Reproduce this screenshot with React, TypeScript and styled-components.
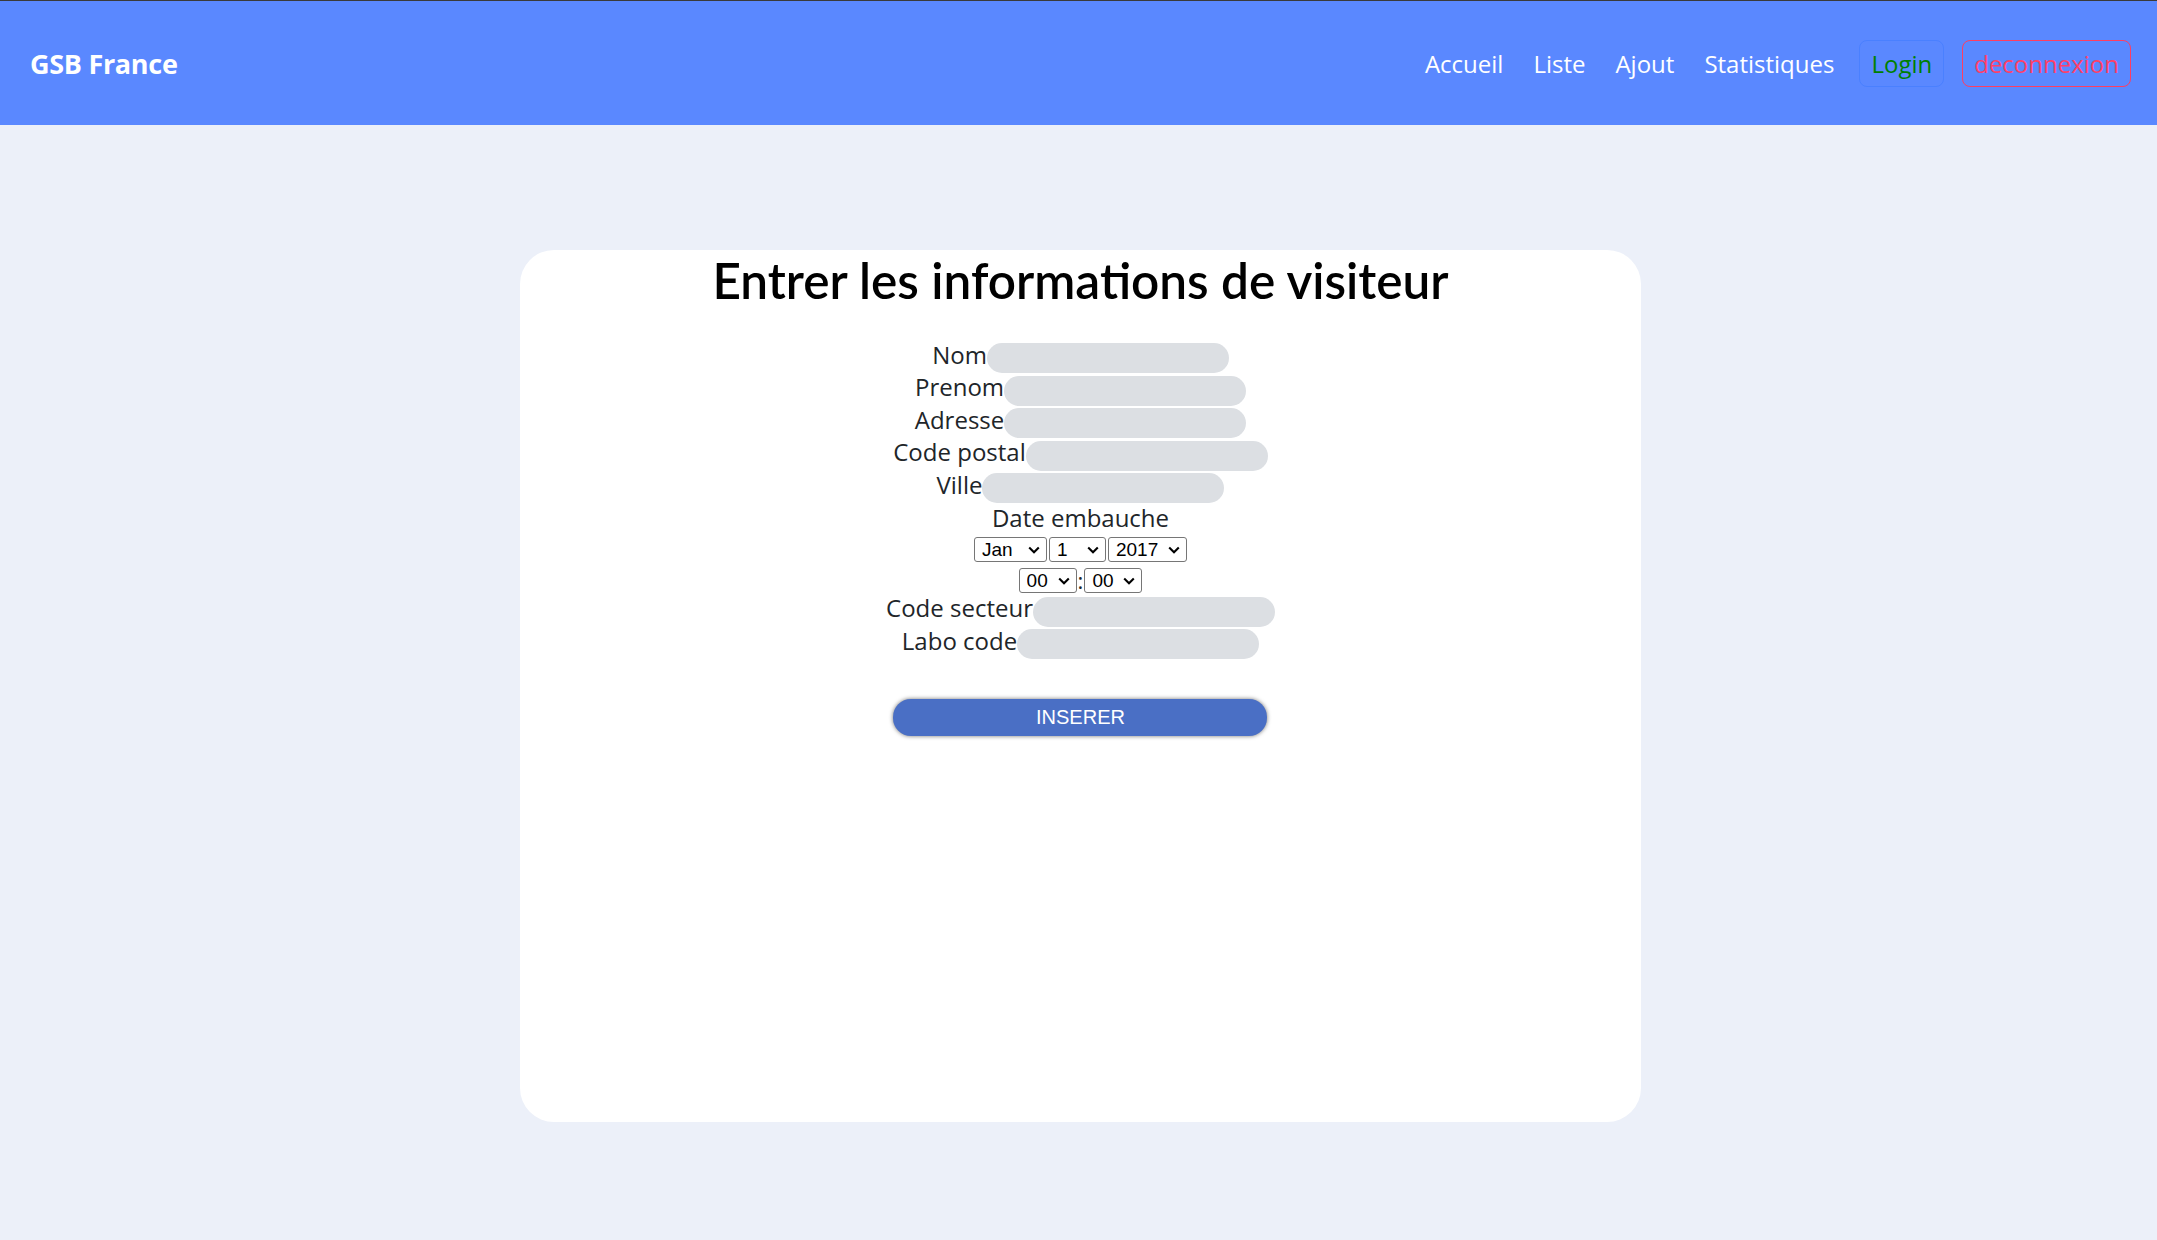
import React from "react";
import styled, { createGlobalStyle } from "styled-components";

const GlobalStyle = createGlobalStyle`
  html, body { margin: 0; padding: 0; background: #ecf0f9; }
  body { font-family: "Open Sans", "Noto Sans", sans-serif; color: #212529; }
  * { box-sizing: border-box; }
`;

const Page = styled.div`
  min-height: 100vh;
  background: #ecf0f9;
`;

const Navbar = styled.nav`
  height: 125px;
  border-top: 1px solid #3a3a3a;
  background: #5a88ff;
  display: flex;
  align-items: center;
  justify-content: space-between;
  padding: 0 26px 0 30px;
`;

const Brand = styled.a`
  font-size: 27px;
  font-weight: 700;
  color: #fff;
  text-decoration: none;
  letter-spacing: -0.3px;
`;

const NavList = styled.ul`
  display: flex;
  align-items: center;
  list-style: none;
  margin: 0;
  padding: 0;
`;

const NavLink = styled.a`
  display: block;
  padding: 0 15px;
  font-size: 24px;
  line-height: 47px;
  color: #fff;
  text-decoration: none;
`;

const NavButton = styled.button<{ $tone: "login" | "logout" }>`
  height: 47px;
  padding: 0 11px;
  border-radius: 8px;
  background: transparent;
  font-family: inherit;
  font-size: 24px;
  border: 1px solid ${(p) => (p.$tone === "login" ? "#4a80ff" : "#ff3d61")};
  color: ${(p) => (p.$tone === "login" ? "#008000" : "#ff4068")};
  margin-left: ${(p) => (p.$tone === "login" ? "10px" : "18px")};
`;

const Main = styled.main`
  padding: 125px 0 0 4px;
`;

const Card = styled.section`
  width: 1121px;
  height: 872px;
  margin: 0 auto;
  background: #fff;
  border-radius: 34px;
  display: flex;
  flex-direction: column;
  align-items: center;
`;

const Title = styled.h1`
  margin: 0 0 31px;
  font-family: Lato, "Open Sans", sans-serif;
  font-size: 49.5px;
  font-weight: 600;
  line-height: 61px;
  color: #000;
`;

const Form = styled.form`
  display: flex;
  flex-direction: column;
  align-items: center;
`;

const FieldRow = styled.div<{ $gapTop?: number }>`
  display: flex;
  align-items: center;
  height: 32.5px;
  margin-top: ${(p) => p.$gapTop ?? 0}px;
`;

const Label = styled.label`
  font-size: 24px;
  line-height: 1;
  padding-bottom: 7px;
  color: #212529;
  white-space: nowrap;
`;

const TextInput = styled.input`
  width: 242px;
  height: 30px;
  border: none;
  border-radius: 15px;
  background: #dcdfe3;
  padding: 0 12px;
  font-size: 18px;
  outline: none;
`;

const DateLabel = styled.div`
  height: 32.5px;
  font-size: 24px;
  line-height: 26px;
  color: #212529;
`;

const SelectRow = styled.div<{ $gap: number; $top: number }>`
  display: flex;
  align-items: center;
  gap: ${(p) => p.$gap}px;
  height: 25px;
  margin-top: ${(p) => p.$top}px;
`;

const SelectBox = styled.div<{ $w: number }>`
  position: relative;
  width: ${(p) => p.$w}px;
  height: 25px;
`;

const Select = styled.select`
  appearance: none;
  -webkit-appearance: none;
  width: 100%;
  height: 100%;
  border: 1px solid #767676;
  border-radius: 3px;
  background: #fff;
  font-family: "Liberation Sans", Arial, sans-serif;
  font-size: 19px;
  color: #000;
  padding: 0 0 0 7px;
  margin: 0;
`;

const Chevron = styled.svg`
  position: absolute;
  right: 7px;
  top: 9px;
  width: 12px;
  height: 8px;
  pointer-events: none;
`;

const Colon = styled.span`
  font-size: 22px;
  line-height: 25px;
  padding: 0 1px;
  color: #212529;
`;

const Submit = styled.button`
  margin-top: 38.5px;
  width: 374px;
  height: 37px;
  border: none;
  border-radius: 18px;
  background: #4a6fc5;
  color: #fff;
  font-family: "Liberation Sans", Arial, sans-serif;
  font-size: 20px;
  box-shadow: 0 0 4px rgba(0, 0, 0, 0.55);
`;

const months = ["Jan", "Feb", "Mar", "Apr", "May", "Jun", "Jul", "Aug", "Sep", "Oct", "Nov", "Dec"];
const days = Array.from({ length: 31 }, (_, i) => String(i + 1));
const years = Array.from({ length: 30 }, (_, i) => String(2000 + i));
const hours = Array.from({ length: 24 }, (_, i) => String(i).padStart(2, "0"));
const minutes = Array.from({ length: 60 }, (_, i) => String(i).padStart(2, "0"));

const Dropdown = ({ w, options, value }: { w: number; options: string[]; value: string }) => (
  <SelectBox $w={w}>
    <Select defaultValue={value}>
      {options.map((o) => (
        <option key={o} value={o}>
          {o}
        </option>
      ))}
    </Select>
    <Chevron viewBox="0 0 12 8">
      <path d="M1.2 1.5 L6 6.2 L10.8 1.5" fill="none" stroke="#000" strokeWidth="2.1" />
    </Chevron>
  </SelectBox>
);

const Field = ({ label, gapTop }: { label: string; gapTop?: number }) => (
  <FieldRow $gapTop={gapTop}>
    <Label>{label}</Label>
    <TextInput type="text" />
  </FieldRow>
);

export default function App() {
  return (
    <Page>
      <GlobalStyle />
      <Navbar>
        <Brand href="#">GSB France</Brand>
        <NavList>
          <li><NavLink href="#">Accueil</NavLink></li>
          <li><NavLink href="#">Liste</NavLink></li>
          <li><NavLink href="#">Ajout</NavLink></li>
          <li><NavLink href="#">Statistiques</NavLink></li>
          <li><NavButton $tone="login">Login</NavButton></li>
          <li><NavButton $tone="logout">deconnexion</NavButton></li>
        </NavList>
      </Navbar>
      <Main>
        <Card>
          <Title>Entrer les informations de visiteur</Title>
          <Form onSubmit={(e) => e.preventDefault()}>
            <Field label="Nom" />
            <Field label="Prenom" />
            <Field label="Adresse" />
            <Field label="Code postal" />
            <Field label="Ville" />
            <DateLabel>Date embauche</DateLabel>
            <SelectRow $gap={2} $top={0}>
              <Dropdown w={73} options={months} value="Jan" />
              <Dropdown w={57} options={days} value="1" />
              <Dropdown w={79} options={years} value="2017" />
            </SelectRow>
            <SelectRow $gap={0} $top={6}>
              <Dropdown w={58} options={hours} value="00" />
              <Colon>:</Colon>
              <Dropdown w={58} options={minutes} value="00" />
            </SelectRow>
            <Field label="Code secteur" gapTop={2.5} />
            <Field label="Labo code" />
            <Submit type="submit">INSERER</Submit>
          </Form>
        </Card>
      </Main>
    </Page>
  );
}
